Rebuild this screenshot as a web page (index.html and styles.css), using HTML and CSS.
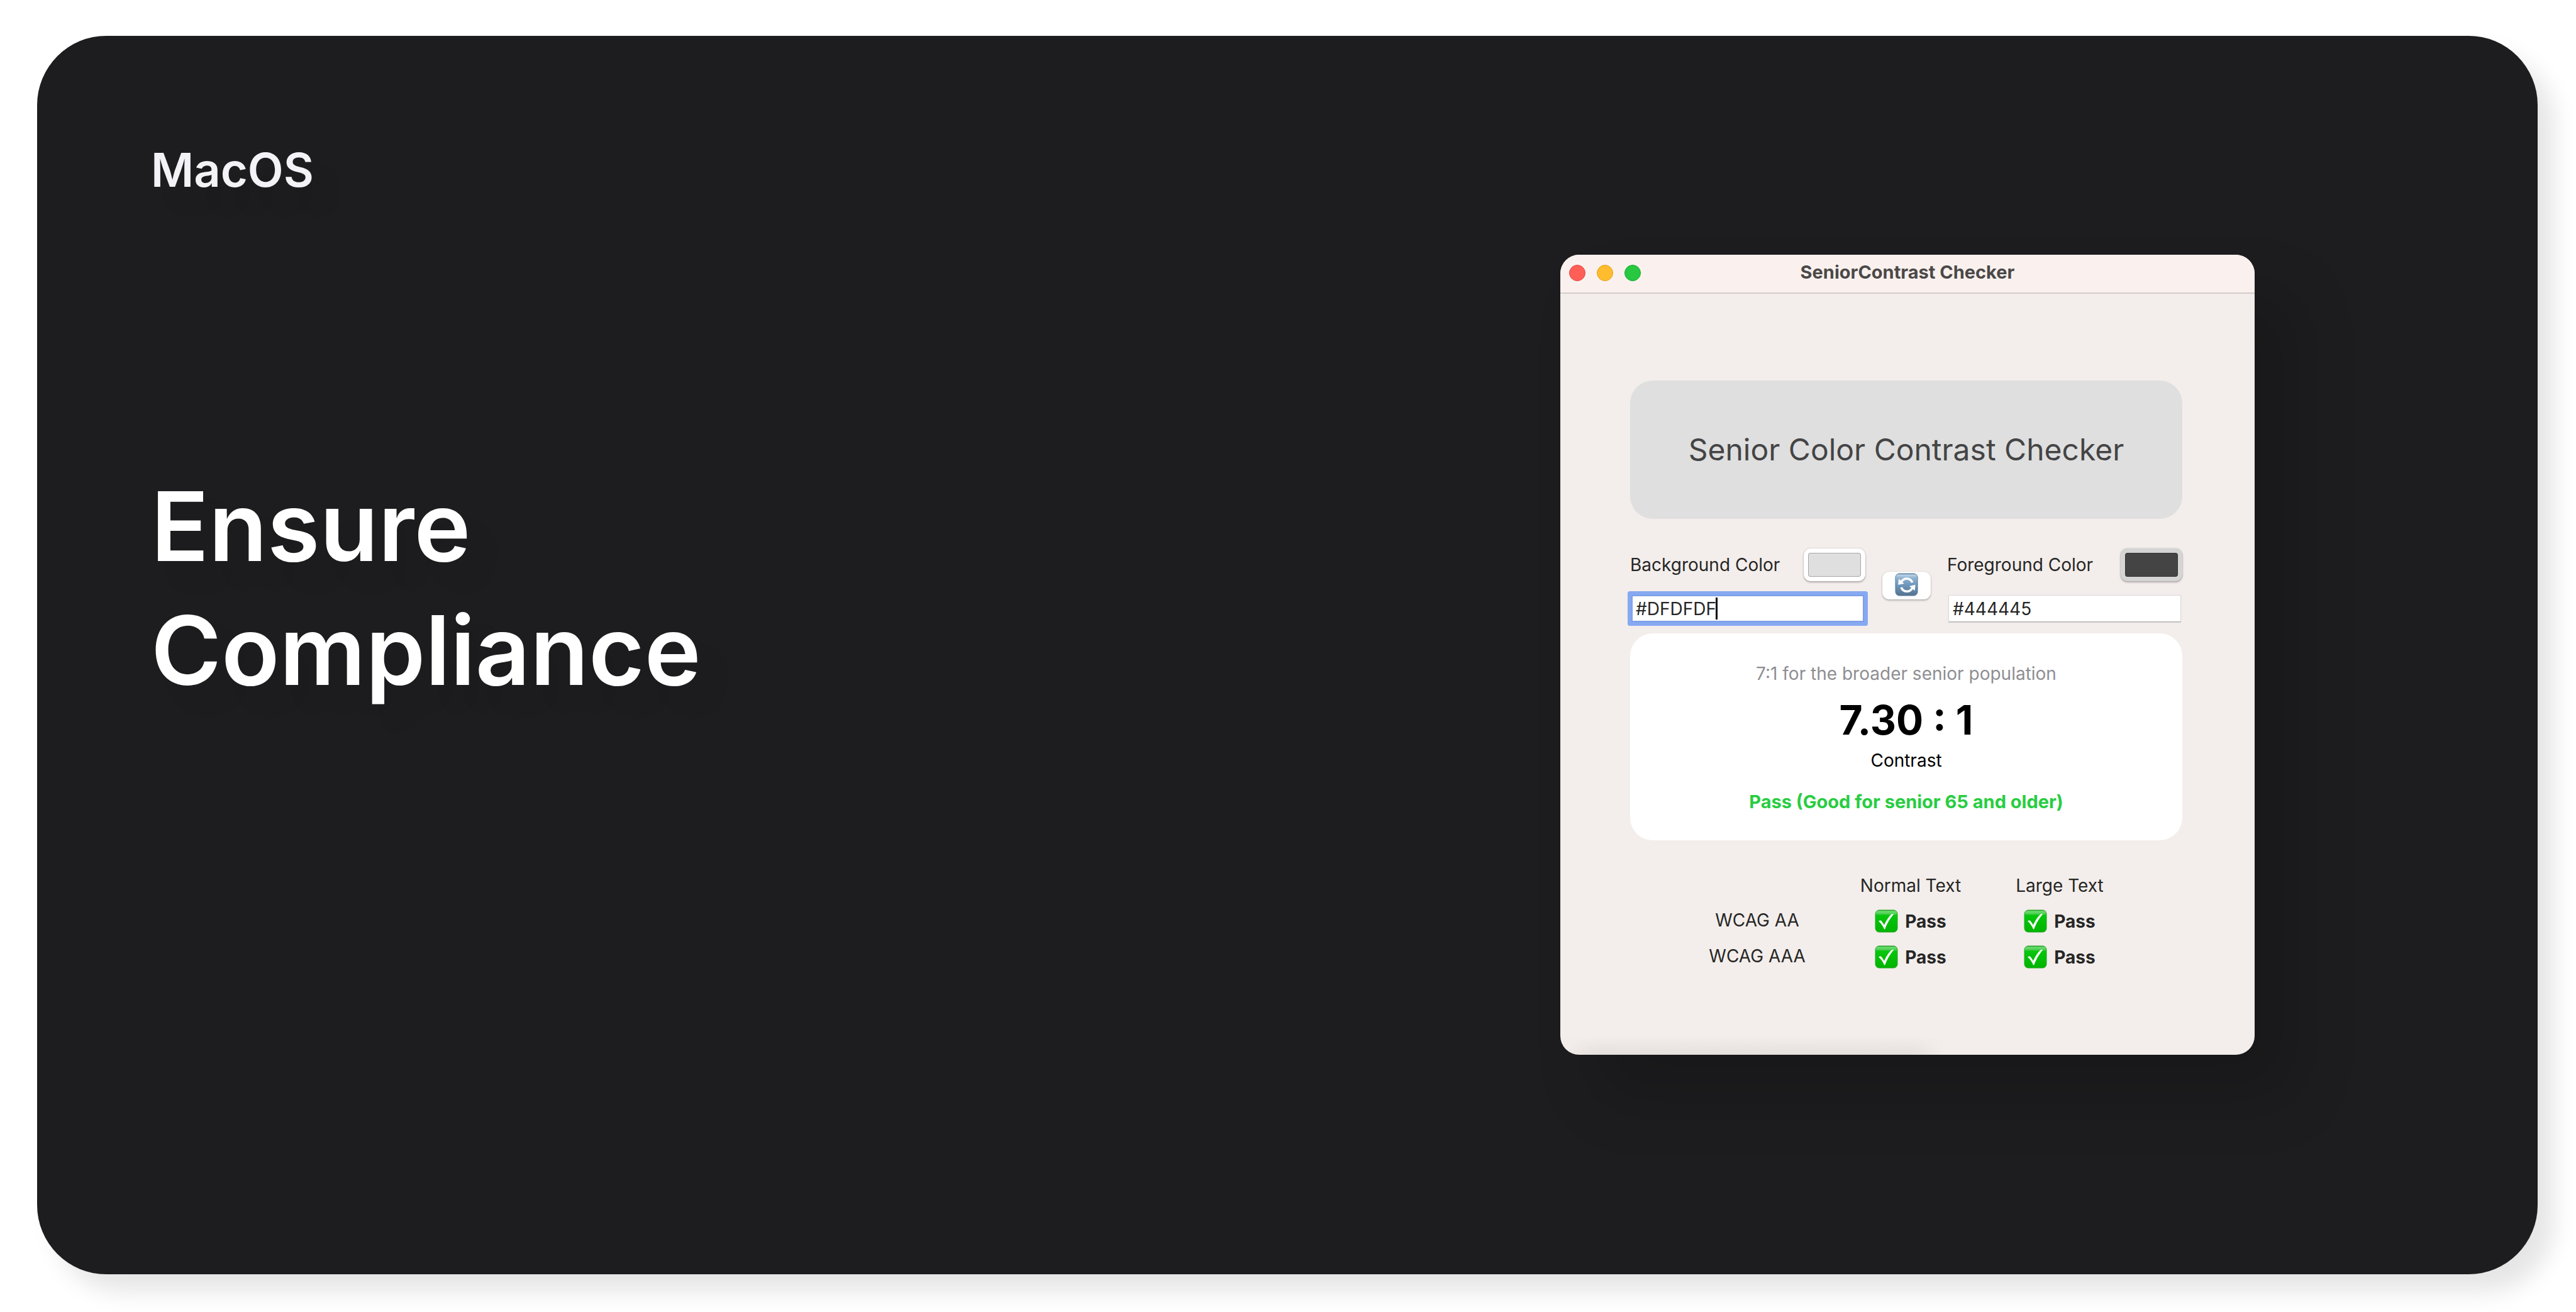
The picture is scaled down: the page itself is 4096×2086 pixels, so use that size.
FILE: index.html
```html
<!DOCTYPE html>
<html lang="en">
<head>
<meta charset="utf-8">
<title>SeniorContrast Checker</title>
<link rel="stylesheet" href="styles.css">
</head>
<body>
<svg class="sprite" aria-hidden="true">
  <defs>
    <linearGradient id="green" x1="0" y1="0" x2="0" y2="1">
      <stop offset="0" stop-color="#1fa51c"/>
      <stop offset=".06" stop-color="#6fdc74"/>
      <stop offset=".16" stop-color="#4fd055"/>
      <stop offset=".24" stop-color="#06c60c"/>
      <stop offset="1" stop-color="#00b400"/>
    </linearGradient>
    <linearGradient id="blue" x1="0" y1="0" x2="0" y2="1">
      <stop offset="0" stop-color="#5c8cb4"/>
      <stop offset=".06" stop-color="#bcd3e6"/>
      <stop offset=".2" stop-color="#8fb2d0"/>
      <stop offset=".5" stop-color="#6f98bd"/>
      <stop offset="1" stop-color="#55748f"/>
    </linearGradient>
    <symbol id="check" viewBox="0 0 37 37">
      <rect x="1" y="1" width="35" height="35" rx="6" fill="url(#green)" stroke="#2aa52a" stroke-width="1"/>
      <path d="M6 18.4c1.6-.9 3.2-1.2 4.4-.4 1.6 1.700 3 4 4.500 6.800C18.300 17.500 22 11.500 26.200 7.800c1.300-.8 2.800-.9 4-.6C24.300 14.500 19.800 21.500 16.400 31c-.3.500-1.200.5-1.500 0C12.800 26.200 10 21.800 6 18.400z" fill="#fff"/>
    </symbol>
    <symbol id="swap" viewBox="0 0 37 37">
      <rect x="1" y="1" width="35" height="35" rx="6" fill="url(#blue)" stroke="#54799a" stroke-width="1"/>
      <g fill="none" stroke="#fff" stroke-width="3.600">
        <path d="M10.500 13.500C13 10 16.500 8.700 19.500 9c4 .3 6.800 2.600 8.200 6.200"/>
        <path d="M27.500 24.500C25 28 21.500 29.500 18.500 29.200c-4-.3-7-2.600-8.400-6.400"/>
      </g>
      <path d="M6.300 9.300 5 18.700l9.800-1.800z" fill="#fff"/>
      <path d="M31.700 28.200 32.600 18.700l-9.600 2.300z" fill="#fff"/>
    </symbol>
  </defs>
</svg>

<main class="slide">
  <section class="intro">
    <p class="platform">MacOS</p>
    <h1 class="headline">Ensure<br>Compliance</h1>
  </section>

  <section class="window">
    <header class="titlebar">
      <div class="lights">
        <button class="light light-close" aria-label="Close"></button>
        <button class="light light-min" aria-label="Minimize"></button>
        <button class="light light-zoom" aria-label="Zoom"></button>
      </div>
      <h2 class="title">SeniorContrast Checker</h2>
    </header>

    <div class="content">
      <div class="preview">Senior Color Contrast Checker</div>

      <form class="pickers">
        <div class="picker">
          <div class="picker-top">
            <label for="bg">Background Color</label>
            <button type="button" class="well" aria-label="Choose background color"><span class="chip chip-bg"></span></button>
          </div>
          <div class="field field-focus">
            <input class="hex" id="bg" type="text" value="#DFDFDF">
            <span class="caret"></span>
          </div>
        </div>
        <button type="button" class="swap" aria-label="Swap colors"><svg class="icon"><use href="#swap"/></svg></button>
        <div class="picker">
          <div class="picker-top">
            <label for="fg">Foreground Color</label>
            <button type="button" class="well well-active" aria-label="Choose foreground color"><span class="chip chip-fg"></span></button>
          </div>
          <div class="field">
            <input class="hex" id="fg" type="text" value="#444445">
          </div>
        </div>
      </form>

      <div class="result">
        <p class="hint">7:1 for the broader senior population</p>
        <p class="ratio">7.30 : 1</p>
        <p class="caption">Contrast</p>
        <p class="verdict">Pass (Good for senior 65 and older)</p>
      </div>

      <table class="levels">
        <thead>
          <tr><td class="col-level"></td><th class="col-normal" scope="col">Normal Text</th><th scope="col">Large Text</th></tr>
        </thead>
        <tbody>
          <tr>
            <th scope="row">WCAG AA</th>
            <td><span class="pass"><svg class="icon"><use href="#check"/></svg>Pass</span></td>
            <td><span class="pass"><svg class="icon"><use href="#check"/></svg>Pass</span></td>
          </tr>
          <tr>
            <th scope="row">WCAG AAA</th>
            <td><span class="pass"><svg class="icon"><use href="#check"/></svg>Pass</span></td>
            <td><span class="pass"><svg class="icon"><use href="#check"/></svg>Pass</span></td>
          </tr>
        </tbody>
      </table>
    </div>
  </section>
</main>
</body>
</html>
```
FILE: styles.css
```css
* { box-sizing: border-box; }

body {
  margin: 0;
  padding: 57px 61px 60px 59px;
  background: #fff;
  color: #262626;
  font-family: Inter, "Liberation Sans", sans-serif;
  font-size: 28px;
  line-height: 34px;
  overflow: hidden;
}

h1, h2, p { margin: 0; }

button {
  padding: 0;
  border: 0;
  font: inherit;
}

.sprite {
  position: absolute;
  width: 0;
  height: 0;
}

.slide {
  display: flex;
  justify-content: space-between;
  align-items: flex-start;
  min-height: calc(100vh - 117px);
  padding: 0 450px 0 181px;
  border-radius: 110px;
  background: #1d1d1f;
  box-shadow: 26px 28px 36px rgba(0, 0, 0, 0.1);
}

/* Left column */
.intro { padding-top: 167px; }

.platform {
  color: #f3f2f6;
  font-size: 74px;
  font-weight: 600;
  line-height: 92px;
  text-shadow: 32px 32px 32px rgba(0, 0, 0, 0.05);
}

.headline {
  margin-top: 423px;
  color: #fff;
  font-size: 152px;
  font-weight: 600;
  line-height: 197px;
  text-shadow: 32px 32px 32px rgba(0, 0, 0, 0.05);
}

/* App window */
.window {
  position: relative;
  flex: 0 1 1104px;
  margin-top: 348px;
  overflow: hidden;
  border-radius: 30px;
  background: #f3eeeb;
  box-shadow: 62px 66px 100px rgba(0, 0, 0, 0.17);
}

.window::after {
  content: "";
  position: absolute;
  left: 0;
  bottom: 0;
  width: 610px;
  height: 30px;
  background: linear-gradient(rgba(80, 70, 65, 0), rgba(80, 70, 65, 0.08));
  mask-image: linear-gradient(90deg, transparent, #000 60px, #000 560px, transparent);
}

.titlebar {
  display: grid;
  grid-template-columns: 1fr auto 1fr;
  align-items: center;
  height: 62px;
  padding: 0 14px 3px;
  border-bottom: 2px solid #d2cccb;
  background: #faf1ef;
}

.lights {
  display: flex;
  gap: 18px;
}

.light {
  width: 26px;
  height: 26px;
  border: 1px solid;
  border-radius: 50%;
}

.light-close { background: #ff5f57; border-color: #e2463f; }
.light-min { background: #febc2e; border-color: #e1a116; }
.light-zoom { background: #28c840; border-color: #12ac28; }

.title {
  padding-bottom: 2px;
  color: #4b4947;
  font-size: 29px;
  font-weight: 700;
  line-height: 34px;
}

.content { padding: 138px 115px 127px 111px; }

.preview {
  display: flex;
  justify-content: center;
  align-items: center;
  height: 220px;
  border-radius: 36px;
  background: #dfdfdf;
  color: #444445;
  font-size: 48px;
  line-height: 64px;
}

.pickers {
  display: flex;
  justify-content: space-between;
  align-items: flex-start;
  margin-top: 47px;
}

.picker { width: 374px; }

.picker-top {
  display: flex;
  justify-content: space-between;
  align-items: center;
}

.well {
  display: flex;
  width: 98px;
  height: 52px;
  padding: 7px;
  border-radius: 11px;
  background: #fff;
  box-shadow: 0 0 2px rgba(0, 0, 0, 0.25), 0 2px 3px rgba(0, 0, 0, 0.25);
}

.well-active { background: #d5d5d5; }

.chip {
  flex: 1;
  border: 1px solid rgba(0, 0, 0, 0.25);
  border-radius: 4px;
}

.chip-bg { background: #dfdfdf; }
.chip-fg { background: #444445; }

.field {
  position: relative;
  margin: 22px 2px 0;
}

.hex {
  display: block;
  width: 100%;
  height: 43px;
  padding: 0 6px;
  border: 1px solid #dcd8d6;
  border-bottom-color: #b4b0ae;
  border-radius: 0;
  background: #fff;
  color: #262626;
  font: inherit;
  outline: none;
  box-shadow: 0 1px 1px rgba(0, 0, 0, 0.12);
}

.field-focus .hex {
  border: 2px solid #7c9fe8;
  padding: 0 5px;
  box-shadow: 0 0 0 6px #87a9f2;
  border-radius: 1px;
}

.caret {
  position: absolute;
  top: 4px;
  left: 134px;
  width: 3px;
  height: 35px;
  background: #000;
}

.swap {
  display: flex;
  justify-content: center;
  width: 77px;
  height: 44px;
  margin-top: 37px;
  padding-top: 2px;
  border-radius: 11px;
  background: #fff;
  box-shadow: 0 0 2px rgba(0, 0, 0, 0.2), 0 2px 3px rgba(0, 0, 0, 0.22);
}

.icon {
  width: 37px;
  height: 37px;
}

.result {
  margin-top: 18px;
  padding: 47px 36px 44px;
  border-radius: 36px;
  background: #fff;
  text-align: center;
}

.hint { color: #8e8e92; }

.ratio {
  margin-top: 17px;
  color: #000;
  font-size: 64px;
  font-weight: 700;
  line-height: 80px;
}

.caption {
  margin-top: 7px;
  color: #000;
}

.verdict {
  margin-top: 32px;
  color: #28cd41;
  font-size: 29px;
  font-weight: 700;
}

.levels {
  width: 718px;
  margin: 43px 0 0 80px;
  border-collapse: collapse;
  table-layout: fixed;
  text-align: center;
}

.levels th { font-weight: 400; }

.levels th,
.levels td {
  height: 57px;
  padding: 0;
}

.levels tbody th { padding-bottom: 4px; }

.col-level, .col-normal { width: 244px; }

.pass {
  display: flex;
  justify-content: center;
  align-items: center;
  gap: 11px;
  font-weight: 700;
}
```
